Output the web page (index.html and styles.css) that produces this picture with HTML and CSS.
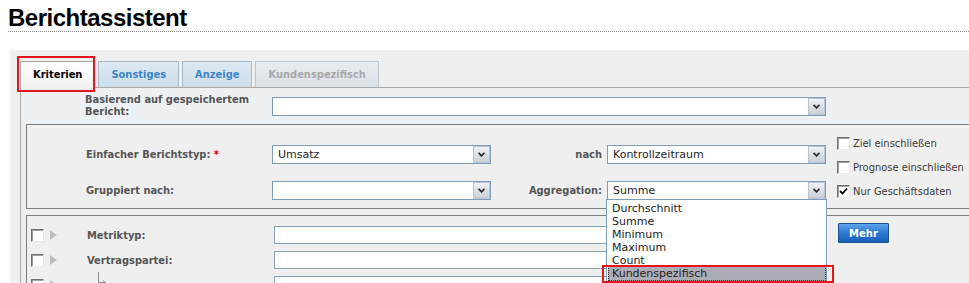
FILE: index.html
```html
<!DOCTYPE html>
<html lang="de">
<head>
    <meta charset="UTF-8">
    <title>Berichtassistent</title>
    <link rel="stylesheet" href="styles.css">
</head>
<body>

    <h1 class="page-title">Berichtassistent</h1>

    <div class="wizard">
        <!-- Tabs -->
        <ul class="tabs">
            <li class="tab tab-active marked">Kriterien</li>
            <li class="tab">Sonstiges</li>
            <li class="tab">Anzeige</li>
            <li class="tab tab-disabled">Kundenspezifisch</li>
        </ul>

        <div class="panel">
            <!-- Saved report -->
            <div class="saved-row">
                <label class="field-label saved-label">Basierend auf gespeichertem<br>Bericht:</label>
                <div class="select select-saved">
                    <span class="select-value"></span>
                    <span class="select-arrow"><svg width="7" height="5" viewBox="0 0 7 5"><polyline points="0.5,0.8 3.5,3.8 6.5,0.8" fill="none" stroke="#2b2b2b" stroke-width="1.8"/></svg></span>
                </div>
            </div>

            <!-- Report type -->
            <div class="box report-box">
                <div class="report-grid">
                    <label class="field-label">Einfacher Berichtstyp: <span class="req">*</span></label>
                    <div class="select">
                        <span class="select-value">Umsatz</span>
                        <span class="select-arrow"><svg width="7" height="5" viewBox="0 0 7 5"><polyline points="0.5,0.8 3.5,3.8 6.5,0.8" fill="none" stroke="#2b2b2b" stroke-width="1.8"/></svg></span>
                    </div>
                    <label class="field-label align-right">nach</label>
                    <div class="select">
                        <span class="select-value">Kontrollzeitraum</span>
                        <span class="select-arrow"><svg width="7" height="5" viewBox="0 0 7 5"><polyline points="0.5,0.8 3.5,3.8 6.5,0.8" fill="none" stroke="#2b2b2b" stroke-width="1.8"/></svg></span>
                    </div>

                    <label class="field-label">Gruppiert nach:</label>
                    <div class="select">
                        <span class="select-value"></span>
                        <span class="select-arrow"><svg width="7" height="5" viewBox="0 0 7 5"><polyline points="0.5,0.8 3.5,3.8 6.5,0.8" fill="none" stroke="#2b2b2b" stroke-width="1.8"/></svg></span>
                    </div>
                    <label class="field-label align-right">Aggregation:</label>
                    <div class="select select-open">
                        <span class="select-value">Summe</span>
                        <span class="select-arrow"><svg width="7" height="5" viewBox="0 0 7 5"><polyline points="0.5,0.8 3.5,3.8 6.5,0.8" fill="none" stroke="#2b2b2b" stroke-width="1.8"/></svg></span>
                        <!-- open list -->
                        <ul class="dropdown">
                            <li>Durchschnitt</li>
                            <li>Summe</li>
                            <li>Minimum</li>
                            <li>Maximum</li>
                            <li>Count</li>
                            <li class="dropdown-hover marked">Kundenspezifisch</li>
                        </ul>
                    </div>
                </div>

                <div class="options">
                    <label class="option"><span class="checkbox"></span>Ziel einschließen</label>
                    <label class="option"><span class="checkbox"></span>Prognose einschließen</label>
                    <label class="option"><span class="checkbox checked"><svg width="9" height="9" viewBox="0 0 9 9"><polyline points="1,4 3.5,6.5 8,1.5" fill="none" stroke="#000" stroke-width="1.8"/></svg></span>Nur Geschäftsdaten</label>
                </div>
            </div>

            <!-- Filters -->
            <div class="box filter-box">
                <div class="filter-row">
                    <span class="checkbox"></span>
                    <span class="expander"></span>
                    <label class="field-label filter-label">Metriktyp:</label>
                    <span class="text-input"></span>
                    <button class="more-btn">Mehr</button>
                </div>
                <div class="filter-row">
                    <span class="checkbox"></span>
                    <span class="expander"></span>
                    <label class="field-label filter-label">Vertragspartei:</label>
                    <span class="text-input"></span>
                </div>
                <div class="filter-row">
                    <span class="checkbox"></span>
                    <span class="expander"></span>
                    <label class="field-label filter-label sub-label"><svg class="tree-line" width="10" height="14" viewBox="0 0 10 14"><path d="M1.5 0 V10.5 H8" fill="none" stroke="#8c8c8c" stroke-width="1"/><path d="M6 8.5 L8.5 10.5 L6 12.5" fill="none" stroke="#8c8c8c" stroke-width="1"/></svg></label>
                    <span class="text-input"></span>
                </div>
            </div>
        </div>
    </div>

</body>
</html>
```

FILE: styles.css
```css
/* Reset */
* {
    margin: 0;
    padding: 0;
    box-sizing: border-box;
}

html, body {
    overflow: hidden;
}

body {
    background-color: #fff;
    font-family: "DejaVu Sans Condensed", "DejaVu Sans", sans-serif;
    font-size: 11px;
    color: #333;
}

ul {
    list-style: none;
}

/* Page title */
.page-title {
    margin-left: 8px;
    padding-top: 4px;
    font-family: "Liberation Sans", Arial, sans-serif;
    font-size: 24px;
    letter-spacing: -0.5px;
    line-height: 27px;
    font-weight: bold;
    color: #000;
    border-bottom: 1px dotted #8a8a8a;
}

/* Wizard container */
.wizard {
    margin: 18px 0 0 10px;
    padding-top: 11px;
    background-color: #efefef;
}

/* Tabs */
.tabs {
    display: flex;
    gap: 3px;
    padding-left: 10px;
}

.tab {
    position: relative;
    height: 26px;
    padding: 0 12px;
    line-height: 25px;
    font-weight: bold;
    color: #3c84c9;
    background: linear-gradient(#dde9f2, #cddde9);
    border: 1px solid #a9bccb;
    border-bottom: none;
}

.tab-active {
    color: #000;
    background: linear-gradient(#ffffff, #f1f1f1);
    border-color: #a9a9a9;
    height: 27px;
    margin-bottom: -1px;
    z-index: 1;
}

.tab-disabled {
    color: #a8a8a8;
    background: linear-gradient(#e6ebef, #dce3e8);
    border-color: #b9c6d0;
}

/* red callout frame */
.marked::after {
    content: "";
    position: absolute;
    border: 2px solid #e8141b;
}

.tab.marked::after {
    top: -6px;
    left: -4px;
    right: -1px;
    bottom: -4px;
}

/* Tab panel */
.panel {
    margin-left: 10px;
    border-top: 1px solid #a9a9a9;
    border-left: 1px solid #a9a9a9;
    padding-bottom: 20px;
}

.field-label {
    font-weight: bold;
    color: #555;
}

.req {
    color: #d40000;
}

.align-right {
    text-align: right;
    padding-right: 5px;
}

.saved-row {
    display: flex;
    align-items: center;
    height: 36px;
    background-color: #edf1f4;
}

.saved-label {
    width: 251px;
    padding-left: 64px;
    line-height: 12px;
}

/* Fake select boxes */
.select {
    position: relative;
    display: flex;
    height: 19px;
    background-color: #fff;
    border: 1px solid #7f9db9;
}

.select-saved {
    width: 554px;
}

.select-value {
    flex: 1;
    padding-left: 5px;
    font-family: "DejaVu Sans", sans-serif;
    line-height: 17px;
    color: #1e1e1e;
}

.select-arrow {
    width: 17px;
    display: flex;
    align-items: center;
    justify-content: center;
    background: linear-gradient(#eef1f5, #c9cfd8);
    border: 1px solid #b9c5d6;
}

/* Dropdown list */
.dropdown {
    position: absolute;
    top: 100%;
    left: -2px;
    right: -2px;
    z-index: 5;
    padding: 2px 0 1px;
    background-color: #fff;
    border: 1px solid #7f9db9;
    font-family: "DejaVu Sans", sans-serif;
    line-height: 13px;
    color: #1e1e1e;
}

.dropdown li {
    padding-left: 5px;
}

.dropdown-hover {
    position: relative;
    margin: -1px 0 0 1px;
    padding-left: 3px !important;
    line-height: 13px;
    background-color: #adadb8;
    border: 1px dotted #333;
}

.dropdown-hover.marked::after {
    top: -2px;
    left: -7px;
    right: -9px;
    bottom: -3px;
}

/* Boxes */
.box {
    margin-left: 5px;
    border: 1px solid #7d7d7d;
    border-right: none;
}

.report-box {
    display: flex;
    align-items: flex-start;
    padding: 20px 0 8px 59px;
}

.report-grid {
    display: grid;
    grid-template-columns: 186px 219px 116px 219px;
    row-gap: 17px;
    align-items: center;
}

.options {
    display: flex;
    flex-direction: column;
    gap: 11px;
    margin: -8px 0 0 11px;
}

.option {
    display: flex;
    align-items: center;
    gap: 3px;
    height: 13px;
    color: #3a3a3a;
}

.checkbox {
    width: 13px;
    height: 13px;
    flex-shrink: 0;
    display: flex;
    align-items: center;
    justify-content: center;
    background-color: #fff;
    border: 1px solid;
    border-color: #707070 #e8e8e8 #e8e8e8 #707070;
    box-shadow: inset 1px 1px 0 #a0a0a0;
}

.filter-box {
    margin-top: 6px;
    border-bottom: none;
    padding: 10px 0 0 4px;
    display: flex;
    flex-direction: column;
    gap: 7px;
}

.filter-row {
    display: flex;
    align-items: center;
    height: 18px;
}

.expander {
    width: 0;
    height: 0;
    margin-left: 6px;
    border-top: 5px solid transparent;
    border-bottom: 5px solid transparent;
    border-left: 7px solid #bdbdbd;
}

.filter-label {
    width: 217px;
    padding-left: 30px;
}

.sub-label {
    align-self: flex-start;
    height: 18px;
}

.tree-line {
    display: block;
    margin: -4px 0 0 10px;
}

.text-input {
    width: 552px;
    height: 18px;
    background-color: #fff;
    border: 1px solid #8aa0b8;
}

.more-btn {
    align-self: flex-start;
    margin: -3px 0 0 12px;
    width: 51px;
    height: 20px;
    font-family: "DejaVu Sans", sans-serif;
    font-size: 10px;
    font-weight: bold;
    color: #fff;
    background: linear-gradient(#5fa3ea, #2a78d6 50%, #1a5fb8);
    border: 1px solid #1d5294;
    border-radius: 1px;
}
```
